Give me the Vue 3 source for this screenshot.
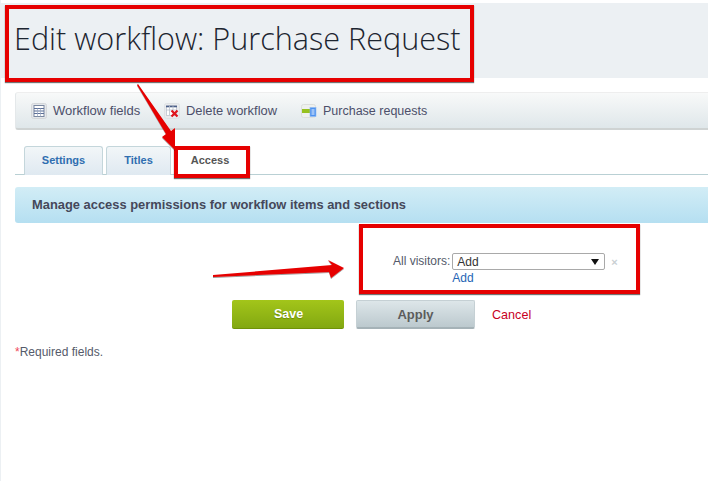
<script setup>
const tabs = [
  { label: 'Settings', width: 79 },
  { label: 'Titles', width: 65 },
]
</script>

<template>
  <div class="page">
    <header class="head">
      <h1>Edit workflow: Purchase Request</h1>
    </header>
    <main class="content">
      <nav class="toolbar">
        <a class="tool tool-a">
          <svg width="16" height="16" viewBox="0 0 16 16">
            <rect x="0.5" y="0.5" width="15" height="15" rx="2" fill="#e4e7ea" stroke="#d4d7da" />
            <rect x="3" y="2.5" width="10" height="11" fill="#fff" stroke="#7a88a0" />
            <path d="M3 5.5h10M3 8h10M3 10.5h10" stroke="#5d7099" stroke-width="1.2" />
            <path d="M6.5 5.5v8M9.5 5.5v8" stroke="#9aa8c0" stroke-width="0.7" />
          </svg>
          <span>Workflow fields</span>
        </a>
        <a class="tool tool-b">
          <svg width="16" height="16" viewBox="0 0 16 16">
            <rect x="0.5" y="0.5" width="15" height="15" rx="2" fill="#e9ebed" stroke="#dfe2e4" />
            <rect x="2.5" y="2.5" width="10" height="10" fill="#fff" stroke="#c9ced6" />
            <path d="M2 3.5h11" stroke="#4b5f88" stroke-width="1.6" />
            <path d="M5.5 3v9M9 3v9M2 7h10" stroke="#b8c0cc" stroke-width="0.8" />
            <path d="M7.5 7.5l6 6M13.5 7.5l-6 6" stroke="#e0141c" stroke-width="2.2" />
          </svg>
          <span>Delete workflow</span>
        </a>
        <a class="tool tool-c">
          <svg width="16" height="16" viewBox="0 0 16 16">
            <rect x="0.5" y="1.5" width="14" height="13" rx="2" fill="#eef0ee" stroke="#dcdfdc" />
            <rect x="1" y="6" width="9" height="4" fill="#96c11f" />
            <rect x="9" y="4.5" width="6" height="9" fill="#4f93ef" stroke="#8db8f2" stroke-width="0.6" />
            <path d="M10.5 7h3M10.5 9h3M10.5 11h3" stroke="#fff" stroke-width="0.9" />
          </svg>
          <span>Purchase requests</span>
        </a>
      </nav>

      <div class="tabs">
        <a v-for="tab in tabs" :key="tab.label" class="tab" :style="{ width: tab.width + 'px' }">{{ tab.label }}</a>
        <a class="tab-active">Access</a>
      </div>

      <h2 class="band">Manage access permissions for workflow items and sections</h2>

      <section class="perm">
        <span class="perm-label">All visitors:</span>
        <div class="perm-field">
          <div class="perm-row">
            <div class="select">
              <span>Add</span>
              <svg width="8" height="6" viewBox="0 0 8 6"><path d="M0 0h8L4 6z" fill="#111" /></svg>
            </div>
            <span class="remove">×</span>
          </div>
          <a class="add">Add</a>
        </div>
      </section>

      <div class="actions">
        <button class="btn save">Save</button>
        <button class="btn apply">Apply</button>
        <a class="cancel">Cancel</a>
      </div>

      <p class="required"><span>*</span>Required fields.</p>
    </main>

    <div class="mark mark-title"></div>
    <div class="mark mark-tab"></div>
    <div class="mark mark-form"></div>

    <svg class="arrows" width="708" height="481" viewBox="0 0 708 481">
      <defs>
        <filter id="sh" x="-10%" y="-10%" width="120%" height="120%">
          <feDropShadow dx="0" dy="1" stdDeviation="0.6" flood-color="#000" flood-opacity="0.4" />
        </filter>
      </defs>
      <path d="M138 84L171 131L175 128L175 150L162 137L166 134L137 85Z" fill="#e60000" filter="url(#sh)" />
      <path d="M213 275L332 265L328 260L344 268L331 278L329 272L213 277Z" fill="#e60000" filter="url(#sh)" />
    </svg>
  </div>
</template>

<style scoped>
.page {
  position: relative;
  width: 708px;
  height: 481px;
  overflow: hidden;
  background: #fff;
  font-family: "Liberation Sans", Arial, sans-serif;
  box-sizing: border-box;
  padding-top: 3px;
}
.page::before {
  content: "";
  position: absolute;
  left: 0;
  top: 0;
  bottom: 0;
  width: 1px;
  background: #ecf0f3;
}
.head {
  height: 75px;
  background: #ecf0f3;
  box-sizing: border-box;
  padding-left: 14px;
}
h1 {
  margin: 0;
  padding-top: 13px;
  font-family: "Open Sans", sans-serif;
  font-weight: 300;
  font-size: 30.6px;
  line-height: 44px;
  color: #1c2530;
  white-space: nowrap;
}
.content {
  padding: 14px 0 0 15px;
}
.toolbar {
  height: 38px;
  box-sizing: border-box;
  display: flex;
  align-items: center;
  padding-left: 15px;
  border-top: 1px solid #eeeeee;
  border-left: 1px solid #e4e8ea;
  border-bottom: 2px solid #cfd3d3;
  border-radius: 3px 0 0 3px;
  background: linear-gradient(#f8f9f9, #dfe7ea);
}
.tool {
  display: flex;
  align-items: center;
  gap: 6px;
  font-size: 13px;
  color: #4c4f6a;
}
.tool-a { width: 133px; }
.tool-b { width: 137px; font-size: 12.9px; }
.tool-c { font-size: 12.5px; }
.tabs {
  display: flex;
  height: 29px;
  margin-top: 16px;
  padding-left: 9px;
  gap: 3px;
  border-bottom: 1px solid #b9d0d4;
  box-sizing: border-box;
}
.tab {
  box-sizing: border-box;
  height: 29px;
  border: 1px solid #c4d6db;
  border-bottom: none;
  border-radius: 3px 3px 0 0;
  background: linear-gradient(#f2f6f8, #dfe9f1);
  text-align: center;
  font-size: 11px;
  font-weight: 700;
  line-height: 27px;
  color: #2f6eb0;
}
.tab-active {
  width: 72px;
  text-align: center;
  font-size: 11px;
  font-weight: 700;
  line-height: 29px;
  color: #555;
}
.band {
  margin: 12px 0 0;
  height: 36px;
  box-sizing: border-box;
  padding-left: 17px;
  border-radius: 3px 0 0 3px;
  background: linear-gradient(#d2edf6, #b5dff1);
  font-size: 12.9px;
  font-weight: 700;
  line-height: 36px;
  color: #45485a;
}
.perm {
  display: flex;
  margin-top: 30px;
  height: 47px;
  padding-left: 378px;
  font-size: 12px;
  color: #555a6a;
}
.perm-label {
  line-height: 16px;
}
.perm-field {
  margin-left: 2px;
}
.perm-row {
  display: flex;
  align-items: center;
}
.select {
  box-sizing: border-box;
  width: 153px;
  height: 17px;
  padding: 0 5px 0 4px;
  display: flex;
  align-items: center;
  justify-content: space-between;
  border: 1px solid #a9a9a9;
  border-radius: 2px;
  color: #333;
}
.remove {
  margin-left: 6px;
  font-size: 11px;
  font-weight: 700;
  color: #c9cfd3;
}
.add {
  display: block;
  margin-top: 1px;
  line-height: 14px;
  color: #2565b5;
}
.actions {
  display: flex;
  align-items: center;
  padding-left: 217px;
}
.btn {
  box-sizing: border-box;
  height: 29px;
  padding: 0;
  border: none;
  border-radius: 2px;
  font-family: inherit;
  font-size: 13px;
  font-weight: 700;
}
.save {
  width: 112px;
  padding-left: 1px;
  background: linear-gradient(#a3c51a, #82a811);
  border-bottom: 1px solid #6f9208;
  color: #fff;
  font-size: 12.5px;
  text-shadow: 0 1px 1px #6a8a05;
}
.apply {
  width: 119px;
  margin-left: 12px;
  background: linear-gradient(#dde6e9, #bcc9ce);
  border: 1px solid #c5d0d4;
  border-bottom: 2px solid #a5b2b7;
  color: #5c5c5c;
}
.cancel {
  margin-left: 17px;
  font-size: 12.6px;
  color: #c8001e;
}
.required {
  margin: 16px 0 0;
  font-size: 12px;
  line-height: 14px;
  color: #555a6a;
}
.required span {
  color: #ef4a5a;
}
.mark {
  position: absolute;
  box-sizing: border-box;
  border: 4px solid #e60000;
  box-shadow: 0 1px 1px rgba(0, 0, 0, 0.55);
}
.mark-title {
  left: 5px;
  top: 5px;
  width: 469px;
  height: 77px;
}
.mark-tab {
  left: 174px;
  top: 146px;
  width: 76px;
  height: 32px;
}
.mark-form {
  left: 359px;
  top: 224px;
  width: 281px;
  height: 70px;
}
.arrows {
  position: absolute;
  left: 0;
  top: 0;
  pointer-events: none;
}
</style>
